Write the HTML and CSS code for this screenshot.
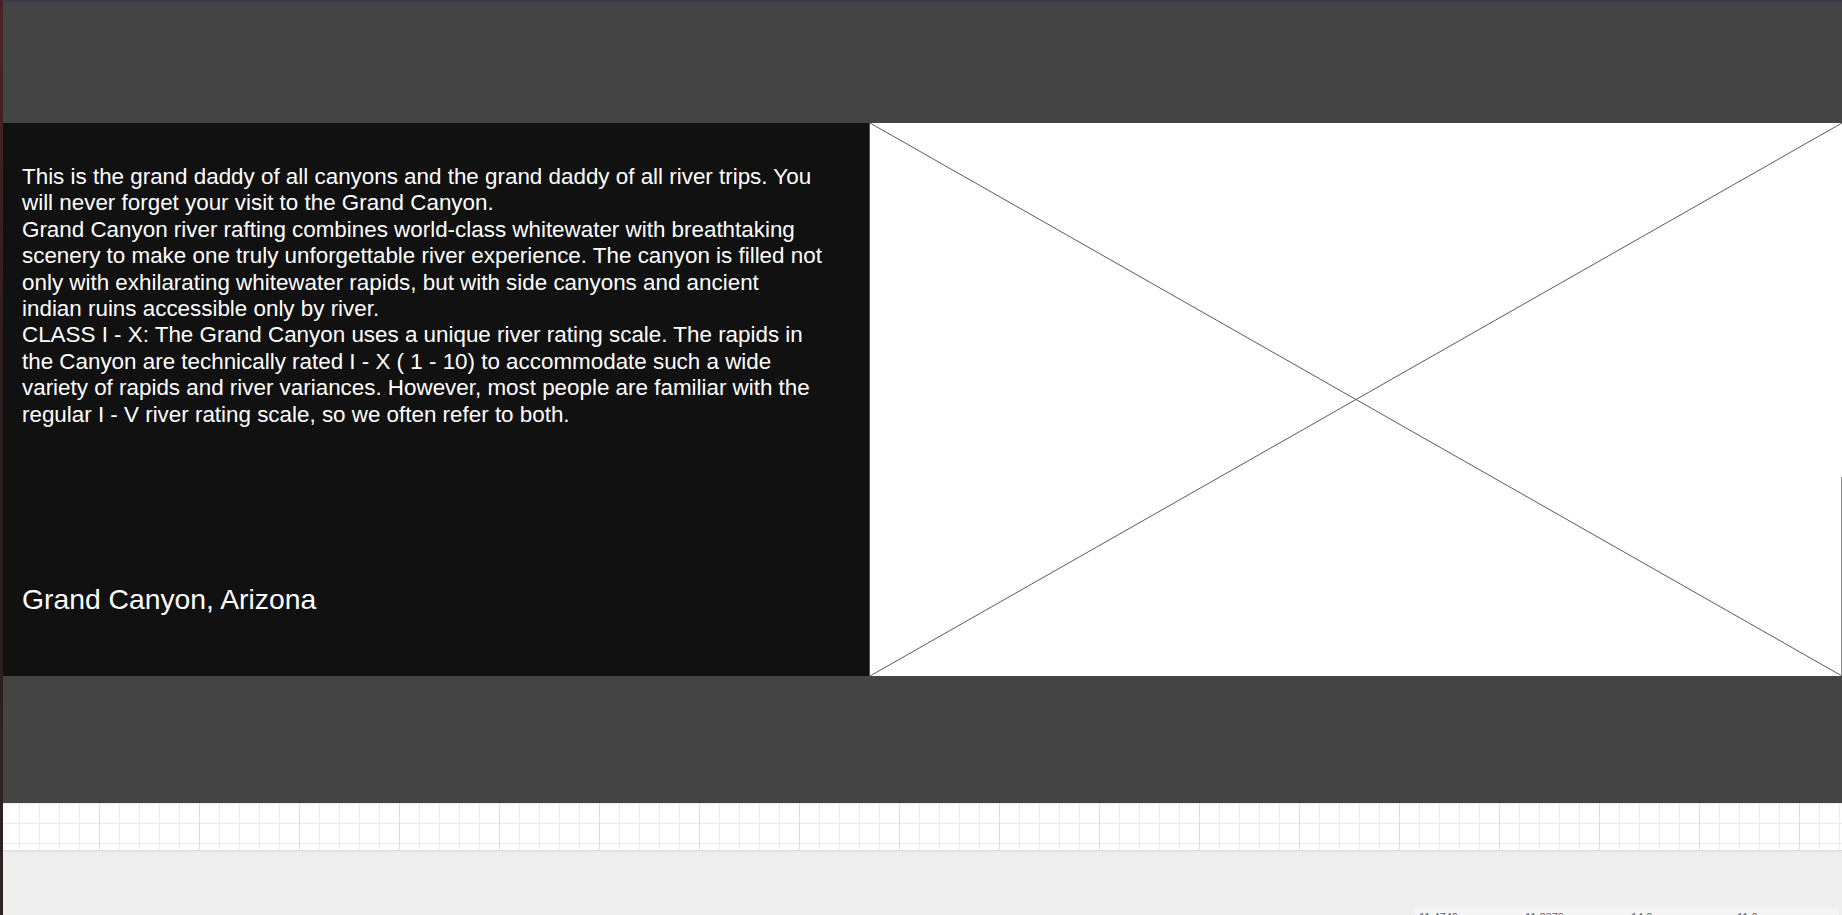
FILE: index.html
```html
<!DOCTYPE html>
<html lang="en">
<head>
<meta charset="utf-8">
<title>Grand Canyon</title>
<link rel="stylesheet" href="styles.css">
</head>
<body>
<div class="app">
  <div class="edge"></div>
  <div class="canvas">
    <div class="topline"></div>
    <header class="header"></header>
    <section class="hero">
      <div class="copy">
        <p class="intro">
          <span class="line">This is the grand daddy of all canyons and the grand daddy of all river trips. You will never forget your visit to the Grand Canyon.</span>
          <span class="line">Grand Canyon river rafting combines world-class whitewater with breathtaking scenery to make one truly unforgettable river experience. The canyon is filled not only with exhilarating whitewater rapids, but with side canyons and ancient indian ruins accessible only by river.</span>
          <span class="line">CLASS I - X: The Grand Canyon uses a unique river rating scale. The rapids in the Canyon are technically rated I - X ( 1 - 10) to accommodate such a wide variety of rapids and river variances. However, most people are familiar with the regular I - V river rating scale, so we often refer to both.</span>
        </p>
        <h2 class="place">Grand Canyon, Arizona</h2>
      </div>
      <div class="placeholder">
        <svg class="cross" width="100%" height="100%" preserveAspectRatio="none" viewBox="0 0 100 100">
          <line x1="0" y1="0" x2="100" y2="100" vector-effect="non-scaling-stroke"/>
          <line x1="100" y1="0" x2="0" y2="100" vector-effect="non-scaling-stroke"/>
        </svg>
      </div>
    </section>
    <footer class="footer"></footer>
    <div class="grid"></div>
    <div class="bottom">
      <div class="stats">
        <span class="stat">11.4749</span>
        <span class="stat">11.8879</span>
        <span class="stat">14.0</span>
        <span class="stat">11.0</span>
      </div>
    </div>
  </div>
</div>
</body>
</html>
```
FILE: styles.css
```css
* { box-sizing: border-box; }
html, body { margin: 0; padding: 0; }
body {
  background: #eeeeee;
  font-family: "Liberation Sans", Arial, sans-serif;
  overflow: hidden;
}
.app {
  display: flex;
  height: 915px;
  overflow: hidden;
}
.edge {
  flex: 0 0 3px;
  background: linear-gradient(to bottom, #4a2424 0%, #2e1e1e 40%, #2a2020 70%, #302222 100%);
}
.canvas {
  flex: 1 1 auto;
  display: flex;
  flex-direction: column;
  min-width: 0;
  overflow: hidden;
  background: #eeeeee;
}
.canvas > * { flex-shrink: 0; }
.topline {
  height: 2px;
  background: #3b3b4a;
}
.header {
  height: 121px;
  background: #444444;
}
.hero {
  height: 553px;
  display: flex;
}
.copy {
  flex: 0 0 866px;
  background: #111111;
  color: #ffffff;
  padding: 20px 19px;
  display: flex;
  flex-direction: column;
}
.intro {
  margin: 21px 0 0;
  width: 802px;
  font-size: 22.4px;
  line-height: 26.4px;
}
.line { display: block; }
.place {
  margin: auto 0 41px;
  font-size: 28.3px;
  line-height: 32px;
  font-weight: normal;
}
.placeholder {
  flex: 1 1 auto;
  position: relative;
  background: #ffffff;
  border-left: 1px solid #555555;
}
.placeholder::after {
  content: "";
  position: absolute;
  right: 0;
  top: 354px;
  bottom: 0;
  width: 1px;
  background: #888888;
}
.cross {
  display: block;
}
.cross line {
  stroke: #5a5a5a;
  stroke-width: 1;
}
.footer {
  height: 127px;
  background: #444444;
}
.grid {
  height: 48px;
  border-bottom: 1px solid #dddddd;
  box-shadow: 0 1px 2px rgba(0, 0, 0, 0.04);
  background:
    linear-gradient(to right, #dcdcdc 1px, transparent 1px) 96px 0 / 100px 100%,
    linear-gradient(to right, #ebebeb 1px, transparent 1px) 16px 0 / 20px 100%,
    linear-gradient(to bottom, #ebebeb 1px, transparent 1px) 0 0 / 100% 20px,
    #ffffff;
}
.bottom {
  flex: 1 1 auto;
  display: flex;
  justify-content: flex-end;
  align-items: flex-start;
  padding: 57px 3px 0 0;
}
.stats {
  width: 424px;
  height: 30px;
  background: #f5f5f5;
  display: flex;
  padding: 3px 0 0 4px;
}
.stat {
  flex: 0 0 106px;
  font-size: 11px;
  line-height: 13px;
  color: #666666;
}
```
